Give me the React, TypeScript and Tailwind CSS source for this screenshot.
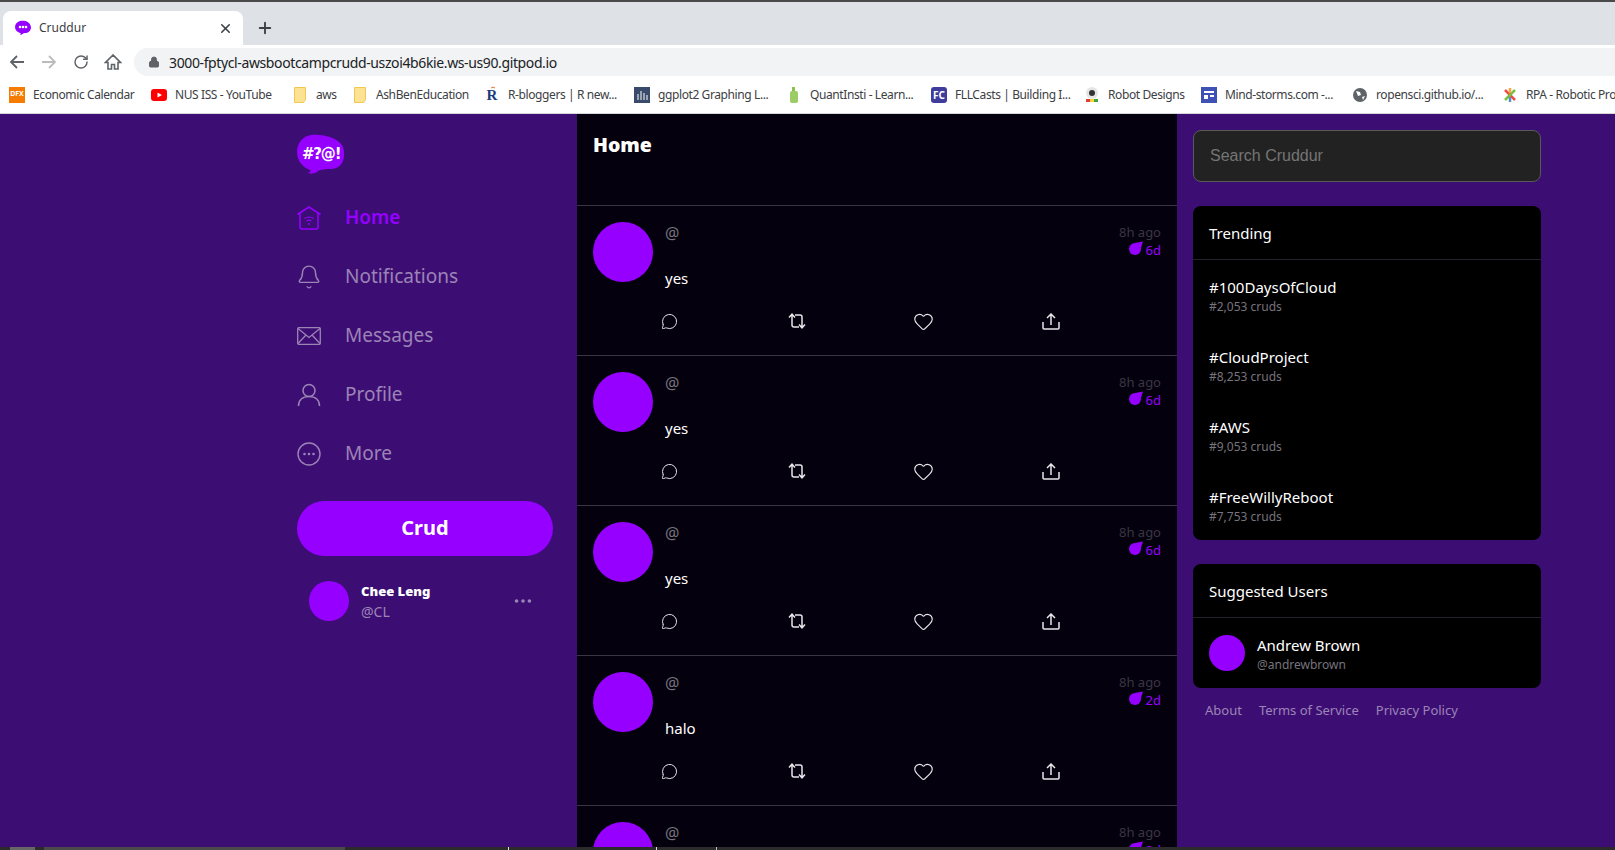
import { Bell, MessageCircle, Heart, Lock, RotateCw, X, Plus, MoreHorizontal } from "lucide-react";

const sans = "font-['Noto_Sans','Open_Sans',sans-serif]";

const bookmarks = [
  { label: "Economic Calendar", icon: "dfx", w: "w-[142px]" },
  { label: "NUS ISS - YouTube", icon: "yt", w: "w-[141px]" },
  { label: "aws", icon: "folder", w: "w-[60px]" },
  { label: "AshBenEducation", icon: "folder", w: "w-[132px]" },
  { label: "R-bloggers | R new...", icon: "r", w: "w-[150px]" },
  { label: "ggplot2 Graphing L...", icon: "gg", w: "w-[152px]" },
  { label: "QuantInsti - Learn...", icon: "qi", w: "w-[145px]" },
  { label: "FLLCasts | Building I...", icon: "fc", w: "w-[153px]" },
  { label: "Robot Designs", icon: "robot", w: "w-[117px]" },
  { label: "Mind-storms.com -...", icon: "ms", w: "w-[151px]" },
  { label: "ropensci.github.io/...", icon: "globe", w: "w-[150px]" },
  { label: "RPA - Robotic Process", icon: "rpa", w: "w-[160px]" },
];

function BookmarkIcon({ kind }: { kind: string }) {
  if (kind === "dfx") return <div className="w-4 h-4 bg-[#f57c00] text-white text-[7px] font-bold flex items-center justify-center">DFX</div>;
  if (kind === "yt") {
    return (
      <svg width="16" height="16" viewBox="0 0 16 16">
        <rect y="2" width="16" height="12" rx="3" fill="#f00" />
        <path d="M6.500 5.500 11 8l-4.500 2.500z" fill="#fff" />
      </svg>
    );
  }
  if (kind === "folder") {
    return (
      <svg width="16" height="16" viewBox="0 0 16 16">
        <path d="M2.500 .5h11v12l-2 3h-9z" fill="#fde293" stroke="#f0c750" />
      </svg>
    );
  }
  if (kind === "r") {
    return (
      <div className="relative w-4 h-4 text-[#1a3a7a] text-[15px] leading-4 font-['Liberation_Serif',serif] font-bold text-center">
        R
        <svg width="8" height="6" viewBox="0 0 8 6" className="absolute right-[2px] -top-[2px]" fill="none"><path d="M1 3a3 3 0 0 1 4 0" stroke="#e2703a" /></svg>
      </div>
    );
  }
  if (kind === "gg") {
    return (
      <svg width="16" height="16" viewBox="0 0 16 16">
        <rect width="16" height="16" fill="#3a4a6b" />
        <path d="M4 7v6M7 4v9M10 6v7M13 8v5" stroke="#fff" />
      </svg>
    );
  }
  if (kind === "qi") {
    return (
      <svg width="16" height="16" viewBox="0 0 16 16">
        <rect x="4" y="4" width="8" height="12" rx="2" fill="#9ccc65" />
        <rect x="6" y="0" width="3" height="4" fill="#8bc34a" />
      </svg>
    );
  }
  if (kind === "fc") return <div className="w-4 h-4 rounded-[3px] bg-[#3f3d9c] text-white text-[10px] leading-4 font-bold text-center">FC</div>;
  if (kind === "robot") {
    return (
      <svg width="16" height="16" viewBox="0 0 16 16">
        <circle cx="8" cy="6" r="6" fill="#e5e5e5" />
        <circle cx="8" cy="6" r="3" fill="#333" />
        <rect x="2" y="12" width="4" height="3" fill="#e53935" />
        <rect x="6" y="12" width="4" height="3" fill="#fdd835" />
        <rect x="10" y="12" width="4" height="3" fill="#43a047" />
      </svg>
    );
  }
  if (kind === "ms") {
    return (
      <svg width="16" height="16" viewBox="0 0 16 16">
        <rect width="16" height="16" fill="#3f51b5" />
        <path d="M3 4h10v2H3zM3 8h4v4H3zM9 8h4v2H9z" fill="#fff" />
      </svg>
    );
  }
  if (kind === "globe") {
    return (
      <svg width="16" height="16" viewBox="0 0 16 16">
        <circle cx="8" cy="8" r="7" fill="#5f6368" />
        <path d="M4 4l4 1 1 3-3 1zM10 10l3-1-2 4z" fill="#fff" />
      </svg>
    );
  }
  return (
    <svg width="16" height="16" viewBox="0 0 16 16" fill="none" strokeWidth="2.500">
      <path d="M3 3l10 10" stroke="#f44a4a" />
      <path d="M13 3 3 13" stroke="#7ac143" />
      <path d="M8 1v5" stroke="#f9a541" />
      <path d="M8 10v5" stroke="#5091cd" />
    </svg>
  );
}

function BrowserChrome() {
  return (
    <div className={`shrink-0 ${sans} text-[12px] text-[#3c4043]`}>
      <div className="h-[2px] bg-[#4a4a4a]" />
      <div className="h-[43px] bg-[#dee1e6] pt-[9px] flex">
        <div className="ml-[3px] w-[240px] h-[34px] bg-white rounded-t-lg flex items-center pl-3 pr-[10px]">
          <svg width="16" height="16" viewBox="0 0 16 16">
            <path d="M5 1c4-1 10 0 11 6 0 4-3 6-6 6-2 0-3 2-5 2 1-1 1-2 0-2-3-1-5-3-5-6s2-5 5-6z" fill="#9500ff" />
            <circle cx="5" cy="7" r="1.300" fill="#fff" /><circle cx="8" cy="7" r="1.300" fill="#fff" /><circle cx="11" cy="7" r="1.300" fill="#fff" />
          </svg>
          <span className="ml-2 flex-1">Cruddur</span>
          <X size={15} strokeWidth={2.500} className="text-[#3c4043]" />
        </div>
        <Plus size={18} strokeWidth={2.500} className="ml-[13px] mt-2 text-[#3c4043]" />
      </div>
      <div className="h-[33px] bg-white flex items-center pl-px pt-px">
        <div className="w-8 flex justify-center">
          <svg width="16" height="14" viewBox="0 0 16 14" fill="none" stroke="#5f6368" strokeWidth="1.800"><path d="M15 7H2M8 1 2 7l6 6" /></svg>
        </div>
        <div className="w-8 flex justify-center">
          <svg width="16" height="14" viewBox="0 0 16 14" fill="none" stroke="#babcbe" strokeWidth="1.800"><path d="M1 7h13M8 1l6 6-6 6" /></svg>
        </div>
        <div className="w-8 flex justify-center">
          <RotateCw size={16} strokeWidth={2.200} className="text-[#5f6368]" />
        </div>
        <div className="w-8 flex justify-center">
          <svg width="18" height="18" viewBox="0 0 18 18" fill="none" stroke="#5f6368" strokeWidth="1.600"><path d="M9 2 1.500 9.500H4V16h3.500v-4.500h3V16H14V9.500h2.500z" /></svg>
        </div>
        <div className="ml-[5px] flex-1 h-[28px] bg-[#f1f3f4] rounded-l-full flex items-center pl-[14px]">
          <Lock size={12} fill="#5f6368" className="text-[#5f6368]" />
          <span className="ml-[9px] text-[14px] text-[#202124] tracking-[-0.38px]">3000-fptycl-awsbootcampcrudd-uszoi4b6kie.ws-us90.gitpod.io</span>
        </div>
      </div>
      <div className="h-[36px] bg-white border-b border-[#d5d7da] pb-[2px] flex items-center pl-[9px] overflow-hidden whitespace-nowrap">
        {bookmarks.map((b) => (
          <div key={b.label} className={`${b.w} shrink-0 flex items-center gap-2`}>
            <BookmarkIcon kind={b.icon} />
            <span className="tracking-[-0.4px]">{b.label}</span>
          </div>
        ))}
      </div>
    </div>
  );
}

function Logo() {
  return (
    <div className="relative w-[48px] h-[40px] mb-[14px]">
      <svg width="48" height="40" viewBox="0 0 48 40" className="absolute inset-0">
        <path d="M14 1C26 0 46 4 47 17c1 10-3 17-12 18-6 0-12 0-15 3-3 2-8 2-9 1 2-1 3-2 2-3C5 33 0 26 0 18 0 9 6 2 14 1z" fill="#9500ff" />
      </svg>
      <span className="relative block pt-[12px] pl-[5px] text-[15px] leading-4 font-bold text-white font-['DejaVu_Sans',sans-serif] tracking-[-1.2px]">#?@!</span>
    </div>
  );
}

function HomeIcon() {
  return (
    <svg width="24" height="24" viewBox="0 0 24 24" fill="none" stroke="currentColor" strokeWidth="1.500">
      <path d="M.5 8.500 12 1l11.500 7.500" />
      <path d="M3 7v14a2 2 0 0 0 2 2h14a2 2 0 0 0 2-2V7" />
      <path d="M7.500 12.500c2.500-2 6.500-2 9 0M9.500 15c1.500-1 3.500-1 5 0" strokeWidth="1.200" />
      <circle cx="12" cy="18" r="1" fill="currentColor" stroke="none" />
    </svg>
  );
}

function MailIcon() {
  return (
    <svg width="24" height="24" viewBox="0 0 24 24" fill="none" stroke="currentColor" strokeWidth="1.300">
      <rect x=".7" y="3.700" width="22.600" height="16.600" rx="1" />
      <path d="m1 4.500 11 9 11-9M1 19.500l8-8.500M23 19.500 15 11" />
    </svg>
  );
}

function PersonIcon() {
  return (
    <svg width="24" height="24" viewBox="0 0 24 24" fill="none" stroke="currentColor" strokeWidth="1.500">
      <circle cx="12" cy="7.500" r="6" />
      <path d="M1.500 23c0-6 4-9.500 10.500-9.500S22.500 17 22.500 23" />
    </svg>
  );
}

function MoreIcon() {
  return (
    <svg width="24" height="24" viewBox="0 0 24 24" fill="none" stroke="currentColor" strokeWidth="1.400">
      <circle cx="12" cy="12" r="11" />
      <circle cx="7.500" cy="12" r="1.300" fill="currentColor" stroke="none" />
      <circle cx="12" cy="12" r="1.300" fill="currentColor" stroke="none" />
      <circle cx="16.500" cy="12" r="1.300" fill="currentColor" stroke="none" />
    </svg>
  );
}

const nav = [
  { label: "Home", icon: <HomeIcon />, active: true },
  { label: "Notifications", icon: <Bell size={26} strokeWidth={1.300} className="-mx-px" /> },
  { label: "Messages", icon: <MailIcon /> },
  { label: "Profile", icon: <PersonIcon /> },
  { label: "More", icon: <MoreIcon /> },
];

function Sidebar() {
  return (
    <nav className="w-[577px] shrink-0 pl-[297px] pr-[24px] pt-[20px]">
      <Logo />
      <div className="flex flex-col">
        {nav.map(({ label, icon, active }) => (
          <div key={label} className={`h-[59px] flex items-center gap-[24px] text-[19px] ${active ? "text-[#9500ff] font-semibold" : "text-[#9c84b6]"}`}>
            {icon}
            <span>{label}</span>
          </div>
        ))}
      </div>
      <button className="mt-[18px] w-[256px] h-[55px] pb-[2px] rounded-full bg-[#9500ff] text-white text-[20px] font-bold">Crud</button>
      <div className="mt-[22px] pl-3 flex items-center">
        <div className="w-10 h-10 rounded-full bg-[#9500ff]" />
        <div className="ml-3 flex-1 pt-[3px]">
          <div className="text-[13px] leading-[20px] font-black text-white">Chee Leng</div>
          <div className="text-[14px] leading-[22px] text-[#9c84b6]">@CL</div>
        </div>
        <MoreHorizontal size={22} className="mr-[19px] text-[#9c84b6]" />
      </div>
    </nav>
  );
}

function RepostIcon() {
  return (
    <svg width="18" height="16" viewBox="0 0 18 16" fill="none" stroke="currentColor" strokeWidth="1.500">
      <path d="M1 4.500 4 1.200l3 3.300M4 1.500V12a2 2 0 0 0 2 2h5" />
      <path d="M11 11.500l3 3.300 3-3.300M14 14.500V4a2 2 0 0 0-2-2H7" />
    </svg>
  );
}

function ShareIcon() {
  return (
    <svg width="18" height="17" viewBox="0 0 18 17" fill="none" stroke="currentColor" strokeWidth="1.500">
      <path d="M1 9v6a1 1 0 0 0 1 1h14a1 1 0 0 0 1-1V9" />
      <path d="M9 12V1.500M5 5l4-4 4 4" />
    </svg>
  );
}

function Activity({ text, expiry }: { text: string; expiry: string }) {
  return (
    <div className="h-[150px] border-b border-[#3b3447] px-4 pt-4">
      <div className="flex">
        <div className="w-[60px] h-[60px] rounded-full bg-[#9500ff] shrink-0" />
        <div className="ml-3 flex-1">
          <div className="flex justify-between">
            <span className="text-[16px] leading-[22px] text-[#77747d]">@</span>
            <div className="flex flex-col items-end text-[13px] leading-[18px] pt-px">
              <span className="text-[#3a3644]">8h ago</span>
              <span className="flex items-center gap-[3px] text-[#9500ff]">
                <svg width="14" height="14" viewBox="0 0 14 14" className="-mt-[4px]" fill="#9500ff">
                  <circle cx="6" cy="8" r="6" />
                  <path d="M6 2 14 .5 11.500 8z" />
                </svg>
                {expiry}
              </span>
            </div>
          </div>
          <div className="mt-[7px] text-[15px] leading-6 text-white">{text}</div>
        </div>
      </div>
      <div className="mt-[19px] ml-[13px] flex text-[#e8e6ea]">
        <div className="w-[127px] h-6 flex items-center justify-center"><MessageCircle size={17} strokeWidth={1.400} /></div>
        <div className="w-[127px] h-6 flex items-center justify-center"><RepostIcon /></div>
        <div className="w-[127px] h-6 flex items-center justify-center"><Heart size={21} strokeWidth={1.300} /></div>
        <div className="w-[127px] h-6 flex items-center justify-center"><ShareIcon /></div>
      </div>
    </div>
  );
}

const trending = [
  { tag: "#100DaysOfCloud", count: "#2,053 cruds" },
  { tag: "#CloudProject", count: "#8,253 cruds" },
  { tag: "#AWS", count: "#9,053 cruds" },
  { tag: "#FreeWillyReboot", count: "#7,753 cruds" },
];

function RightColumn() {
  return (
    <aside className="ml-[16px] w-[348px] shrink-0 pt-4">
      <div className="h-[52px] rounded-lg border border-[#5a5a5a] bg-[#222222] px-4 flex items-center text-[16px] text-[#757575] font-['Liberation_Sans',sans-serif]">Search Cruddur</div>
      <section className="mt-6 rounded-lg bg-black text-white">
        <h3 className="h-[54px] pt-px px-4 flex items-center border-b border-[#24222c] text-[15px]">Trending</h3>
        {trending.map((t) => (
          <div key={t.tag} className="h-[70px] px-4 pt-[17px]">
            <div className="text-[15px] leading-[20px]">{t.tag}</div>
            <div className="mt-px text-[12px] leading-[18px] text-[#77747d]">{t.count}</div>
          </div>
        ))}
      </section>
      <section className="mt-6 rounded-lg bg-black text-white">
        <h3 className="h-[54px] pt-[2px] px-4 flex items-center border-b border-[#24222c] text-[15px]">Suggested Users</h3>
        <div className="h-[70px] px-4 flex items-center gap-3">
          <div className="w-9 h-9 rounded-full bg-[#9500ff]" />
          <div className="pt-[2px]">
            <div className="text-[15px] leading-[20px]">Andrew Brown</div>
            <div className="mt-px text-[12px] leading-[18px] text-[#77747d]">@andrewbrown</div>
          </div>
        </div>
      </section>
      <div className="mt-[12px] pl-3 flex gap-[17px] text-[13px] leading-5 text-[#9c84b6]">
        <span>About</span>
        <span>Terms of Service</span>
        <span>Privacy Policy</span>
      </div>
    </aside>
  );
}

export default function App() {
  return (
    <div className={`h-[850px] flex flex-col overflow-hidden bg-[#3c0e74] ${sans}`}>
      <BrowserChrome />
      <main className="flex-1 flex min-h-0 overflow-hidden">
        <Sidebar />
        <div className="w-[600px] shrink-0 bg-[#05000d]">
          <div className="h-[92px] border-b border-[#3b3447] px-4 pt-[18px] text-[19.500px] leading-[26px] font-black text-white">Home</div>
          <Activity text="yes" expiry="6d" />
          <Activity text="yes" expiry="6d" />
          <Activity text="yes" expiry="6d" />
          <Activity text="halo" expiry="2d" />
          <Activity text="yes" expiry="2d" />
        </div>
        <RightColumn />
      </main>
      <div className="h-[3px] shrink-0 bg-[#2b2b2b] flex">
        <div className="ml-[10px] w-[25px] bg-[#666666]" />
        <div className="ml-[9px] w-[301px] bg-[#4a4a4a]" />
        <div className="ml-[163px] w-px bg-[#dddddd]" />
        <div className="ml-[147px] w-px bg-[#dddddd]" />
        <div className="ml-[59px] w-px bg-[#bbbbbb]" />
      </div>
    </div>
  );
}
